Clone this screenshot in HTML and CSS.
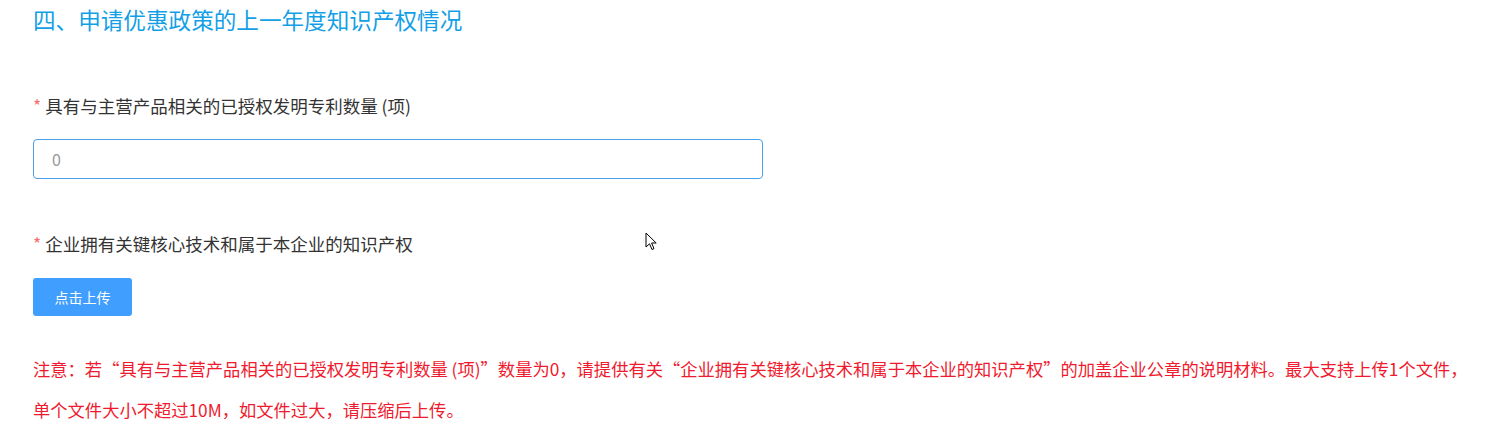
FILE: index.html
```html
<!DOCTYPE html>
<html lang="zh-CN">
<head>
    <meta charset="UTF-8">
    <meta name="viewport" content="width=device-width, initial-scale=1.0">
    <title>知识产权情况</title>
    <link rel="stylesheet" href="styles.css">
</head>
<body>
    <div class="section">
        <h2 class="section-title">四、申请优惠政策的上一年度知识产权情况</h2>

        <div class="form-item first">
            <label class="form-label"><span class="required">*</span>具有与主营产品相关的已授权发明专利数量 (项)</label>
            <input class="form-input" type="text" placeholder="0">
        </div>

        <div class="form-item">
            <label class="form-label"><span class="required">*</span>企业拥有关键核心技术和属于本企业的知识产权</label>
            <button class="upload-btn">点击上传</button>
        </div>

        <p class="note">注意：若“具有与主营产品相关的已授权发明专利数量 (项)”数量为0，请提供有关“企业拥有关键核心技术和属于本企业的知识产权”的加盖企业公章的说明材料。最大支持上传1个文件，单个文件大小不超过10M，如文件过大，请压缩后上传。</p>
    </div>

    <svg class="cursor" width="13" height="20" viewBox="0 0 13 20">
        <path d="M1 1 L1 15 L4.5 11.8 L7 17.5 L9 16.6 L6.6 11 L11.2 11 Z" fill="#fff" stroke="#000" stroke-width="1" stroke-linejoin="round"/>
    </svg>
</body>
</html>
```

FILE: styles.css
```css
body {
    margin: 0;
    font-family: "Noto Sans CJK SC", "Noto Sans", sans-serif;
    background: #fff;
    color: #333;
}
.section {
    padding: 0 16px 0 33px;
}
.section-title {
    margin: 0;
    font-size: 22.6px;
    font-weight: normal;
    line-height: 40px;
    color: #139fe6;
}
.form-item {
    display: flex;
    flex-direction: column;
    align-items: flex-start;
    gap: 21px;
    margin-top: 53px;
}
.form-item.first {
    margin-top: 54px;
}
.form-label {
    font-size: 17.5px;
    line-height: 24px;
    color: #333;
}
.required {
    color: #f56c6c;
    margin-right: 4px;
}
.form-input {
    box-sizing: border-box;
    width: 730px;
    height: 40px;
    padding: 0 18px;
    border: 1px solid #4a9fe8;
    border-radius: 4px;
    font-family: inherit;
    font-size: 16px;
    color: #333;
    outline: none;
}
.form-input::placeholder {
    color: #999;
}
.upload-btn {
    width: 99px;
    height: 38px;
    margin-top: 1px;
    border: none;
    border-radius: 3px;
    background-color: #409eff;
    color: #fff;
    font-family: inherit;
    font-size: 14px;
    cursor: pointer;
}
.note {
    margin: 32px 0 0;
    font-size: 17.3px;
    line-height: 41px;
    color: #f01a2e;
}
.cursor {
    position: absolute;
    left: 645px;
    top: 232px;
}
```
